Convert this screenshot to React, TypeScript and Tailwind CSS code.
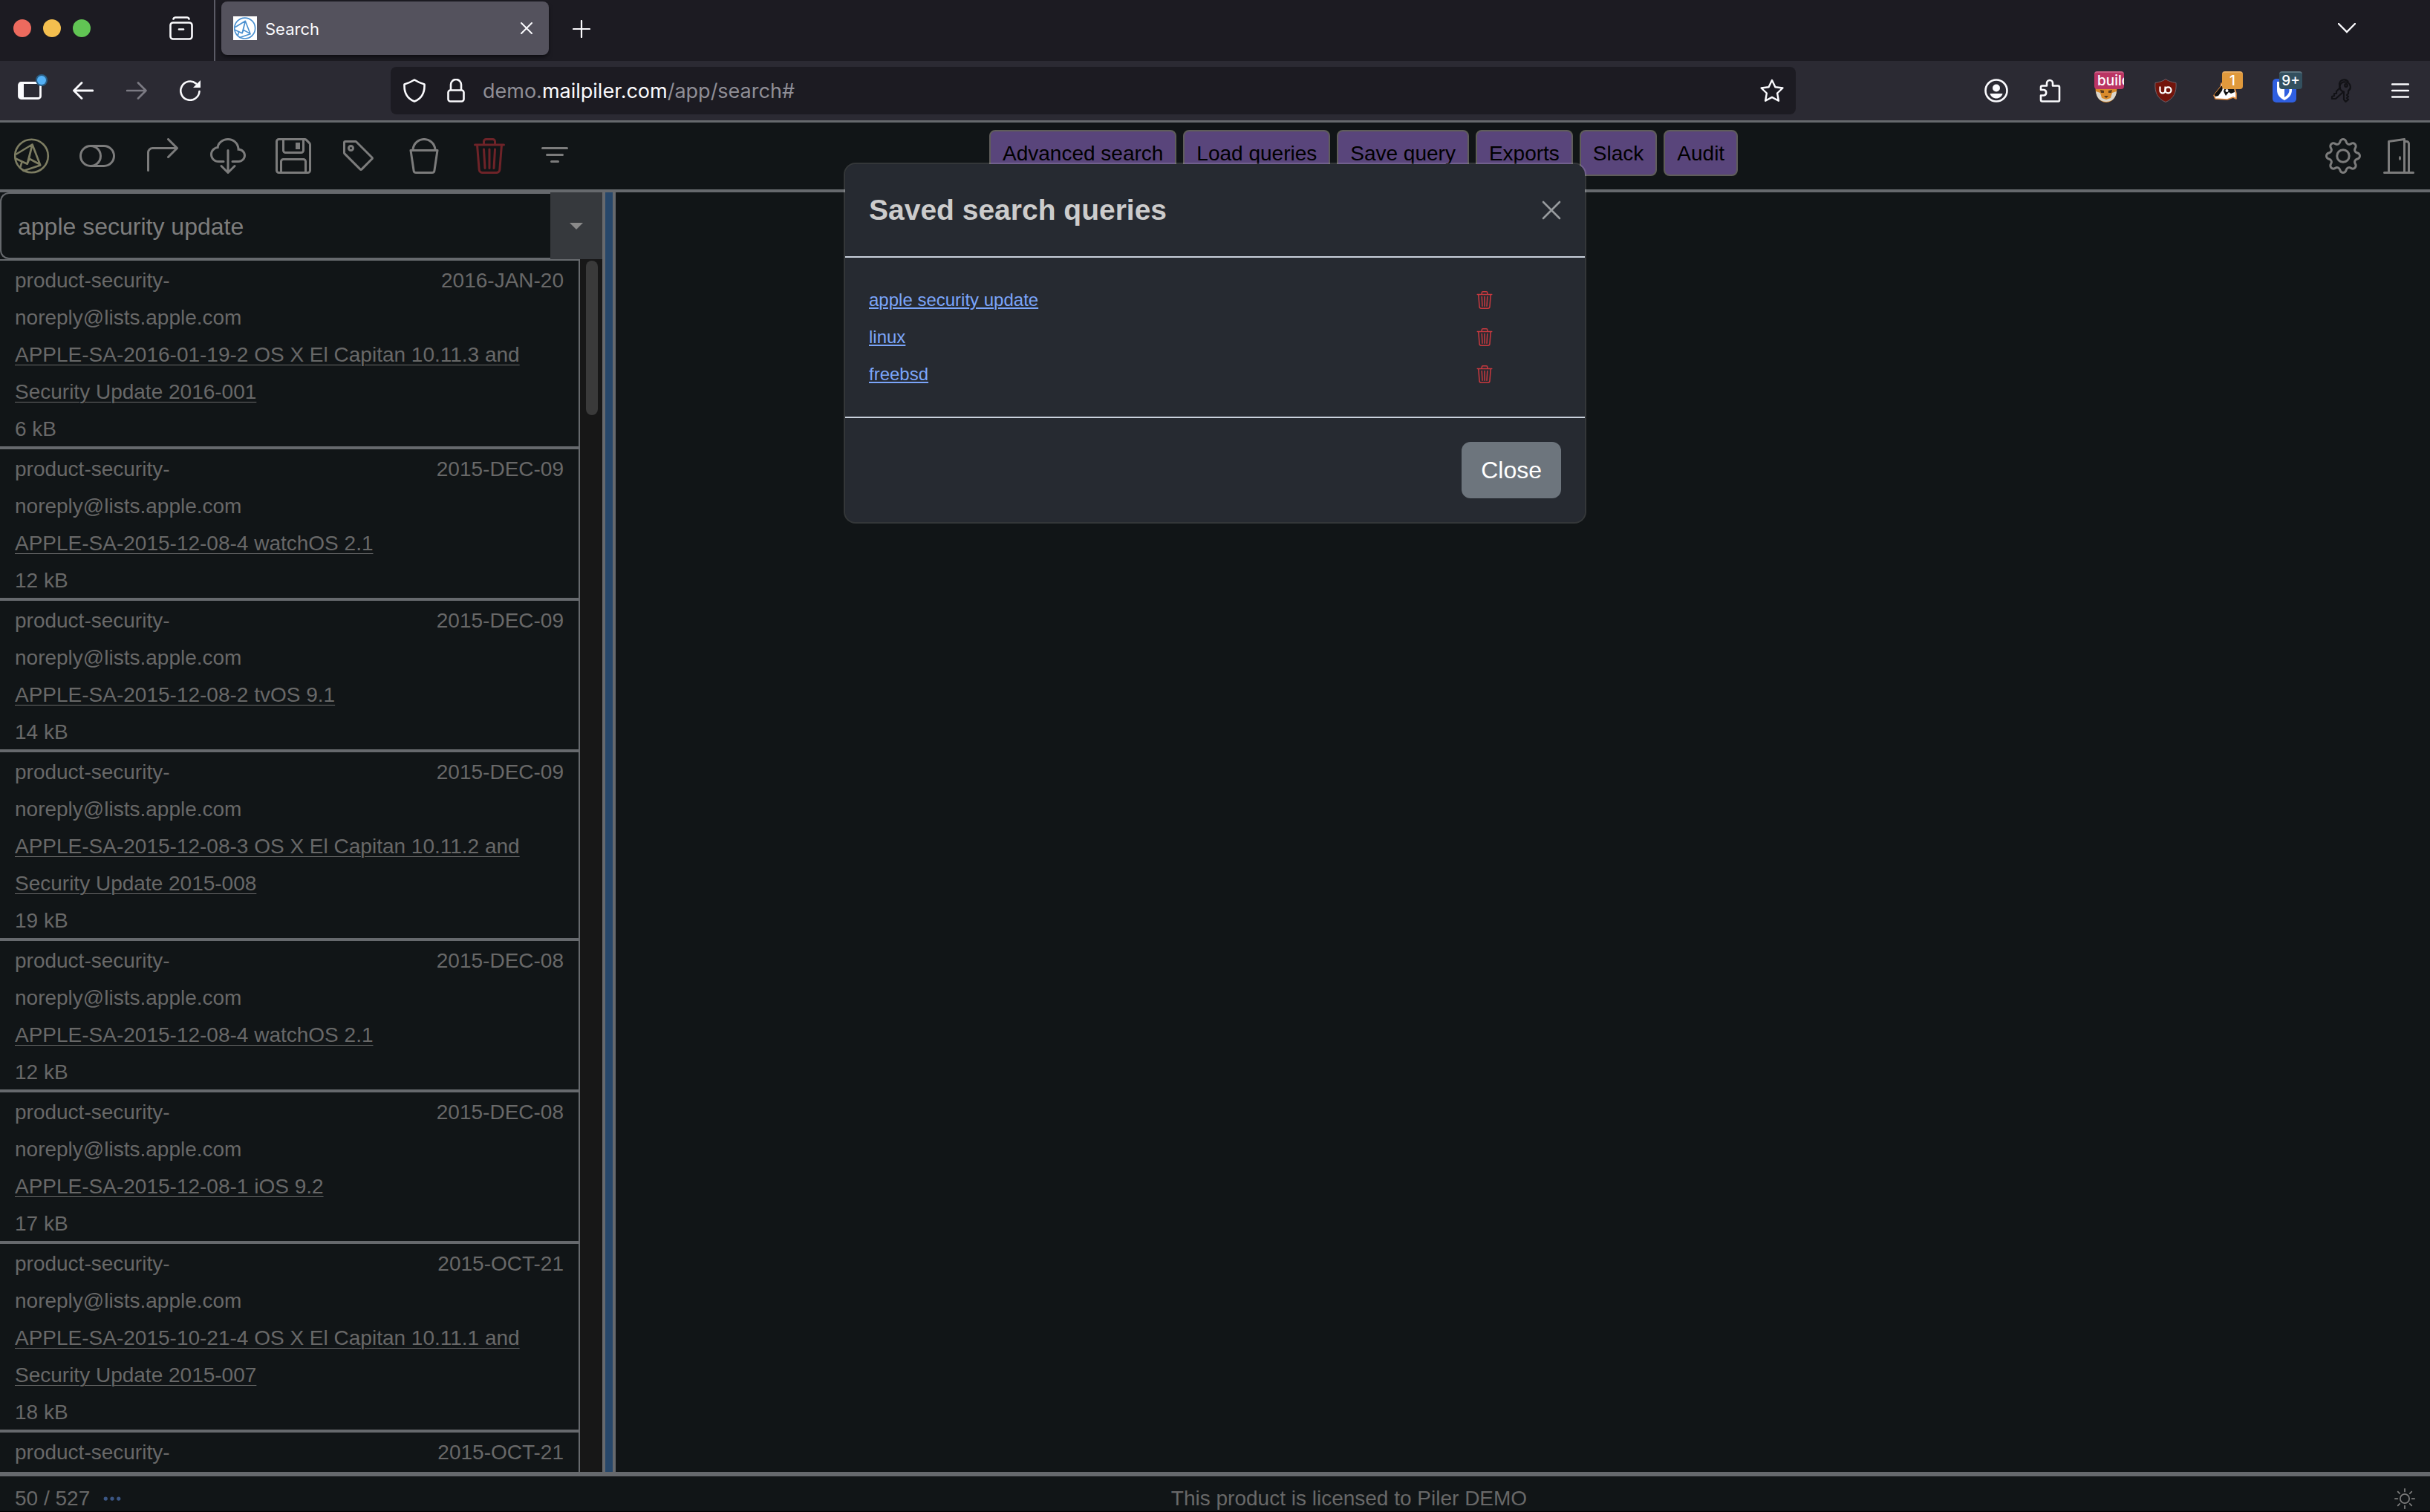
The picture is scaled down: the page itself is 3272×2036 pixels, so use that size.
import { BsArrow90DegRight, BsBucket, BsCloudDownload, BsDoorOpen, BsFilter, BsFloppy, BsGear, BsSun, BsTag, BsThreeDots, BsToggleOff, BsTrash3 } from "react-icons/bs";

type Mail = { subject: string; date: string; size: string };

const mails: Mail[] = [
  { subject: "APPLE-SA-2016-01-19-2 OS X El Capitan 10.11.3 and Security Update 2016-001", date: "2016-JAN-20", size: "6 kB" },
  { subject: "APPLE-SA-2015-12-08-4 watchOS 2.1", date: "2015-DEC-09", size: "12 kB" },
  { subject: "APPLE-SA-2015-12-08-2 tvOS 9.1", date: "2015-DEC-09", size: "14 kB" },
  { subject: "APPLE-SA-2015-12-08-3 OS X El Capitan 10.11.2 and Security Update 2015-008", date: "2015-DEC-09", size: "19 kB" },
  { subject: "APPLE-SA-2015-12-08-4 watchOS 2.1", date: "2015-DEC-08", size: "12 kB" },
  { subject: "APPLE-SA-2015-12-08-1 iOS 9.2", date: "2015-DEC-08", size: "17 kB" },
  { subject: "APPLE-SA-2015-10-21-4 OS X El Capitan 10.11.1 and Security Update 2015-007", date: "2015-OCT-21", size: "18 kB" },
];

const tools = [
  { label: "Toggle preview", Icon: BsToggleOff },
  { label: "Forward message", Icon: BsArrow90DegRight },
  { label: "Download", Icon: BsCloudDownload },
  { label: "Save", Icon: BsFloppy },
  { label: "Tag", Icon: BsTag },
  { label: "Bucket", Icon: BsBucket },
];

const actions = ["Advanced search", "Load queries", "Save query", "Exports", "Slack", "Audit"];
const queries = ["apple security update", "linux", "freebsd"];

function PilerLogo({ className }: { className: string }) {
  return (
    <svg viewBox="0 0 48 48" className={className} fill="none" stroke="currentColor" strokeWidth="2.6" strokeLinejoin="round" strokeLinecap="round">
      <circle cx="23.5" cy="24" r="22.3" />
      <path d="M3 21.500L24.500 8.500L35.300 36.500L12.700 44M24.500 8.500L17.700 34.700L2 27.500M24.500 8.500L20 27.500L34 35M10.300 32.500L8.300 39.500M17.700 34.700L20.500 28" />
    </svg>
  );
}

function TabStrip() {
  return (
    <div className="flex h-[82px] items-start bg-[#1c1b22] text-[#fbfbfe]">
      <div className="flex h-[76px] items-center gap-4 pl-[18px]">
        <span className="size-6 rounded-full bg-[#ec6a5e]" />
        <span className="size-6 rounded-full bg-[#f4bf4f]" />
        <span className="size-6 rounded-full bg-[#61c554]" />
      </div>
      <button aria-label="Firefox View" className="ml-[106px] flex h-[76px] items-center">
        <svg viewBox="0 0 32 32" className="size-8" fill="none" stroke="currentColor" strokeWidth="2.6" strokeLinecap="round">
          <path d="M5.500 3.500a3 3 0 0 1 2.500-2h16a3 3 0 0 1 2.500 2" />
          <rect x="1.500" y="8.500" width="29" height="22" rx="3.500" />
          <path d="M13 17.500h6" />
        </svg>
      </button>
      <span className="ml-7 h-[82px] w-[2px] bg-[#5b5b66]" />
      <div className="mt-[2px] ml-2 flex h-[72px] w-[441px] items-center rounded-lg bg-[#54525d] pr-[22px] pl-4 shadow-md shadow-black/40">
        <span className="flex size-8 items-center justify-center bg-white text-[#4a90d0]">
          <PilerLogo className="size-[30px]" />
        </span>
        <span className="ml-[11px] flex-1 pt-[2px] font-[Inter,sans-serif] text-[22px]">Search</span>
        <button aria-label="Close tab">
          <svg viewBox="0 0 16 16" className="size-4" stroke="currentColor" strokeWidth="2" strokeLinecap="round"><path d="M1 1l14 14M15 1L1 15" /></svg>
        </button>
      </div>
      <button aria-label="New tab" className="ml-8 flex h-[78px] items-center">
        <svg viewBox="0 0 24 24" className="size-6" stroke="currentColor" strokeWidth="2.200" strokeLinecap="round"><path d="M12 1v22M1 12h22" /></svg>
      </button>
      <button aria-label="List all tabs" className="mr-[100px] ml-auto flex h-[76px] items-center">
        <svg viewBox="0 0 24 14" className="w-6" fill="none" stroke="currentColor" strokeWidth="2.400" strokeLinecap="round"><path d="M1 1l11 11L23 1" /></svg>
      </button>
    </div>
  );
}

function Badge({ className, children }: { className: string; children: string }) {
  return <span className={"absolute -top-[10px] flex h-6 items-center overflow-hidden rounded-[4px] border-t-2 border-white/20 bg-clip-border font-[Inter,sans-serif] text-[19px] leading-[22px] font-medium text-white " + className}>{children}</span>;
}

function NavBar() {
  return (
    <div className="flex h-20 items-center bg-[#2b2a33] text-[#fbfbfe]">
      <button aria-label="Sidebar" className="relative ml-6">
        <svg viewBox="0 0 32 24" className="block h-6 w-8"><rect x="1.500" y="1.500" width="29" height="21" rx="3" fill="none" stroke="currentColor" strokeWidth="2.800" /><path d="M2 2h6v20H2z" fill="currentColor" /></svg>
        <span className="absolute -top-2 -right-[6px] size-3 rounded-full bg-[#54b0f5] ring-2 ring-[#2a5f86]" />
      </button>
      <button aria-label="Back" className="ml-[42px]">
        <svg viewBox="0 0 28 24" className="h-6 w-7" fill="none" stroke="currentColor" strokeWidth="2.800" strokeLinecap="round" strokeLinejoin="round"><path d="M12 1.500L1.500 12L12 22.500M2 12h25" /></svg>
      </button>
      <button aria-label="Forward" className="ml-[44px] text-[#7b7a83]">
        <svg viewBox="0 0 28 24" className="h-6 w-7" fill="none" stroke="currentColor" strokeWidth="2.600" strokeLinecap="round" strokeLinejoin="round"><path d="M16 1.500L26.500 12L16 22.500M26 12H1" /></svg>
      </button>
      <button aria-label="Reload" className="ml-[44px]">
        <svg viewBox="0 0 28 28" className="size-7" fill="none" stroke="currentColor" strokeWidth="2.600" strokeLinecap="round"><path d="M26.500 15A12.600 12.600 0 1 1 22 4.500" /><path d="M28 0v10H18z" fill="currentColor" stroke="none" /></svg>
      </button>
      <div className="ml-64 flex h-16 flex-1 items-center rounded-lg bg-[#1c1b22] pr-4 pl-4">
        <svg viewBox="0 0 32 32" className="size-8" fill="none" stroke="currentColor" strokeWidth="2.600" strokeLinejoin="round"><path d="M16 1.500c4 2.500 8 4.500 13.500 6c.5 10-3 19-13.500 23C5.500 26.500 2 17.500 2.500 7.500C8 6 12 4 16 1.500z" /></svg>
        <svg viewBox="0 0 24 32" className="ml-7 h-8 w-6" fill="none" stroke="currentColor" strokeWidth="2.600"><rect x="1.500" y="15.500" width="21" height="15" rx="3" /><path d="M5 15V8a7 7 0 0 1 14 0v7" /></svg>
        <p className="ml-6 flex-1 pt-[2px] font-[Inter,sans-serif] text-[27px] text-[#8f8e96]">demo.<span className="text-[#fbfbfe]">mailpiler.com</span>/app/search#</p>
        <button aria-label="Bookmark">
          <svg viewBox="0 0 32 32" className="size-8" fill="none" stroke="currentColor" strokeWidth="2.400" strokeLinejoin="round"><path d="M16 2l4.400 9.200l10 1.300l-7.300 7l1.800 10.200L16 24.900L7.100 29.700l1.800-10.200l-7.300-7l10-1.300z" /></svg>
        </button>
      </div>
      <div className="mr-7 ml-[254px] flex items-center">
        <button aria-label="Account">
          <svg viewBox="0 0 32 32" className="block size-8"><circle cx="16" cy="16" r="14.500" fill="none" stroke="currentColor" strokeWidth="2.600" /><circle cx="16" cy="12.500" r="5" fill="currentColor" /><path d="M7.500 20h17c-1 4-4.500 6.500-8.500 6.500S8.500 24 7.500 20z" fill="currentColor" /></svg>
        </button>
        <button aria-label="Extensions" className="ml-10">
          <svg viewBox="0 0 32 32" className="block size-8" fill="none" stroke="currentColor" strokeWidth="2.600" strokeLinejoin="round"><path d="M6 9.500h6V6a4 4 0 0 1 8 0v3.500h7q2 0 2 2V29q0 1.500-1.500 1.500H6q-2 0-2-2v-6h4a3.800 3.800 0 0 0 0-7.500H4v-3.500q0-2 2-2z" /></svg>
        </button>
        <button aria-label="Build extension" className="relative ml-11">
          <svg viewBox="0 0 32 32" className="block size-8"><path d="M2 10h28c2 10-4 22-14 22S0 20 2 10z" fill="#d98a2b" /><path d="M2 17l6 2 2 7 6 2 6-2 2-7 6-2c-1 9-6 14-14 14S3 26 2 17z" fill="#d9d5cc" /><path d="M8 15l5 1v3H9zM24 15l-5 1v3h4zM13 23h6l-3 3z" fill="#5a3a1c" /></svg>
          <Badge className="left-0 w-10 bg-[#bb3564] pl-1">build</Badge>
        </button>
        <button aria-label="uBlock Origin" className="ml-12">
          <svg viewBox="0 0 32 32" className="block size-8"><path d="M16 .500c4 3 8 4 14 5C31 18 27 27 16 31.500C5 27 1 18 2 5.500c6-1 10-2 14-5z" fill="#73140b" stroke="#6d6068" /><path d="M8.500 10.500v5.500a3.500 3.500 0 0 0 7 0V10.500" fill="none" stroke="white" strokeWidth="2.200" /><circle cx="19.500" cy="15.300" r="4" fill="none" stroke="white" strokeWidth="2.200" /></svg>
        </button>
        <button aria-label="Privacy Badger" className="relative ml-12">
          <svg viewBox="0 0 32 32" className="block size-8"><path d="M1 22.500L10 11l1-5 5 2h12l3 12v7l-4-2-8 3-16-1z" fill="white" stroke="#e08a3c" strokeWidth="1.600" strokeLinejoin="round" /><path d="M1.500 21.500L11 10l3-2-2 8-5 7-4 1zM14 17l2-6h12l1 7-5 2-3-2-4 5z" fill="#111" /><circle cx="18.500" cy="16" r="2" fill="white" /></svg>
          <Badge className="left-3 w-7 justify-center bg-[#e0993c]">1</Badge>
        </button>
        <button aria-label="Bitwarden" className="relative ml-12">
          <svg viewBox="0 0 32 32" className="block size-8"><rect width="32" height="32" rx="5" fill="#2f5fe0" /><path d="M6 4h20v11c0 7-4 11-10 14C10 26 6 22 6 15z" fill="white" /><path d="M16 8h6.500v7.500c0 4-2.500 7-6.500 9.500z" fill="#2f5fe0" /></svg>
          <Badge className="left-[9px] w-[31px] justify-center bg-[#33505f]">9+</Badge>
        </button>
        <button aria-label="Keys" className="ml-[46px] text-[#121216]">
          <svg viewBox="0 0 32 32" className="block size-8" fill="none" stroke="currentColor" strokeWidth="2.200" strokeLinejoin="round"><path d="M20 4.500a6.500 6.500 0 0 1 4 11.800V20l-2 2 2 2-2 2 2 2-3.500 3-2.500-3V17.500A6.500 6.500 0 0 1 20 4.500z" /><path d="M24 4.500A6.500 6.500 0 0 0 12 7c0 2 0 3.500 1 5l-5 5v3l-3 0v3l-3 1v3h5l10-9" /><circle cx="21" cy="9" r="1.800" /></svg>
        </button>
        <button aria-label="Menu" className="ml-[50px]">
          <svg viewBox="0 0 24 20" className="block h-5 w-6" stroke="currentColor" strokeWidth="2.400" strokeLinecap="round"><path d="M1 1.500h22M1 10h22M1 18.500h22" /></svg>
        </button>
      </div>
    </div>
  );
}

function Toolbar() {
  return (
    <header className="grid h-[97px] grid-cols-[1332px_1fr_auto] items-start border-t-[3px] border-b-4 border-[#66696d] text-[#7c7c7c]">
      <div className="flex gap-10 pt-[21px] pl-[19px]">
        <a href="#" aria-label="Piler" className="text-[#7d7d62]"><PilerLogo className="size-12" /></a>
        {tools.map(({ label, Icon }) => (
          <button key={label} aria-label={label}><Icon className="block size-12" /></button>
        ))}
        <button aria-label="Delete" className="text-[#6e2328]"><BsTrash3 className="block size-12" /></button>
        <button aria-label="Filter"><BsFilter className="block size-12" /></button>
      </div>
      <nav className="flex gap-[9px] pt-[10px]">
        {actions.map((label) => (
          <button key={label} className="rounded-lg border-2 border-[#5f5d5a] bg-[#59457b] px-4 pt-[9px] pb-[7px] text-[28px] leading-[42px] whitespace-nowrap text-black">{label}</button>
        ))}
      </nav>
      <div className="flex gap-[27px] pt-[21px] pr-[18px]">
        <button aria-label="Settings"><BsGear className="block size-12" /></button>
        <a href="#" aria-label="Sign out"><BsDoorOpen className="block size-12" /></a>
      </div>
    </header>
  );
}

function MailRow({ mail }: { mail: Mail }) {
  return (
    <li className="border-b-4 border-[#66696d] px-5 pt-[2px] leading-[50px]">
      <div className="flex items-start justify-between">
        <span>product-security-<br />noreply@lists.apple.com</span>
        <time>{mail.date}</time>
      </div>
      <a href="#" className="block max-w-[700px] underline decoration-1 underline-offset-4">{mail.subject}</a>
      <span className="block h-12">{mail.size}</span>
    </li>
  );
}

function Sidebar() {
  return (
    <aside className="flex w-[811px] flex-col">
      <div className="flex h-[90px]">
        <input aria-label="Search" defaultValue="apple security update" className="min-w-0 flex-1 rounded-l-xl border-2 border-r-0 border-[#66696d] bg-transparent pt-[2px] pl-[22px] text-[32px] text-[#7d7d7d]" />
        <button aria-label="Search options" className="flex w-[70px] items-center justify-center bg-[#36393d]">
          <span className="border-x-[9px] border-t-[9px] border-x-transparent border-t-[#8a8a8a]" />
        </button>
      </div>
      <div className="flex min-h-0 flex-1">
        <ul className="flex-1 overflow-hidden border-t-2 border-r-2 border-[#66696d] text-[28px] text-[#686868]">
          {mails.map((mail, i) => <MailRow key={i} mail={mail} />)}
          <li className="flex justify-between px-5 pt-[2px] leading-[50px]">
            <span>product-security-</span>
            <time>2015-OCT-21</time>
          </li>
        </ul>
        <div className="w-[30px] bg-[#171717] px-2 pt-[2px]">
          <div className="h-52 w-4 rounded-full bg-[#3a3a3a]" />
        </div>
      </div>
    </aside>
  );
}

function SavedQueries() {
  return (
    <div role="dialog" aria-labelledby="dialog-title" className="absolute top-[219px] left-1/2 w-[1000px] -translate-x-1/2 rounded-2xl border-2 border-white/15 bg-[#262a31] bg-clip-padding">
      <div className="flex h-[126px] items-center justify-between border-b-2 border-[#c9d1dc] px-8">
        <h1 id="dialog-title" className="text-[39px] font-bold text-[#cccccc]">Saved search queries</h1>
        <button aria-label="Close dialog" className="text-[#969a9d]">
          <svg viewBox="0 0 26 26" className="size-[26px]" stroke="currentColor" strokeWidth="2.600" strokeLinecap="round"><path d="M2 2l22 22M24 2L2 24" /></svg>
        </button>
      </div>
      <ul className="border-b-2 border-[#c9d1dc] px-8 py-8 text-[24px] leading-[50px]">
        {queries.map((query) => (
          <li key={query} className="flex items-center justify-between pr-[91px]">
            <a href="#" className="text-[#7ba5fa] underline decoration-2 underline-offset-2">{query}</a>
            <button aria-label={"Delete " + query} className="text-[#c8393f]"><BsTrash3 className="block size-6" /></button>
          </li>
        ))}
      </ul>
      <div className="flex justify-end p-8">
        <button className="rounded-xl bg-[#6d757d] px-[26px] py-[14px] text-[32px] leading-12 text-white">Close</button>
      </div>
    </div>
  );
}

export default function App() {
  return (
    <div className="relative flex h-screen flex-col overflow-hidden bg-[#111517] font-['Liberation_Sans',Arial,sans-serif]">
      <TabStrip />
      <NavBar />
      <Toolbar />
      <main className="flex min-h-0 flex-1">
        <Sidebar />
        <div className="w-[18px] border-x-4 border-[#66696d] bg-[#27476a]" />
        <section className="flex-1" />
      </main>
      <footer className="flex h-[54px] items-center border-t-[6px] border-b border-[#66696d] border-b-black pt-3 text-[28px] leading-[36px] text-[#686868]">
        <div className="flex w-1/8 items-center gap-4 pl-5">50 / 527 <a href="#" aria-label="More" className="text-[#3b5684]"><BsThreeDots className="block size-7" /></a></div>
        <p className="flex-1 text-center">This product is licensed to Piler DEMO</p>
        <button aria-label="Theme" className="mr-5 text-[#7c7c7c]"><BsSun className="block size-7" /></button>
      </footer>
      <SavedQueries />
    </div>
  );
}
